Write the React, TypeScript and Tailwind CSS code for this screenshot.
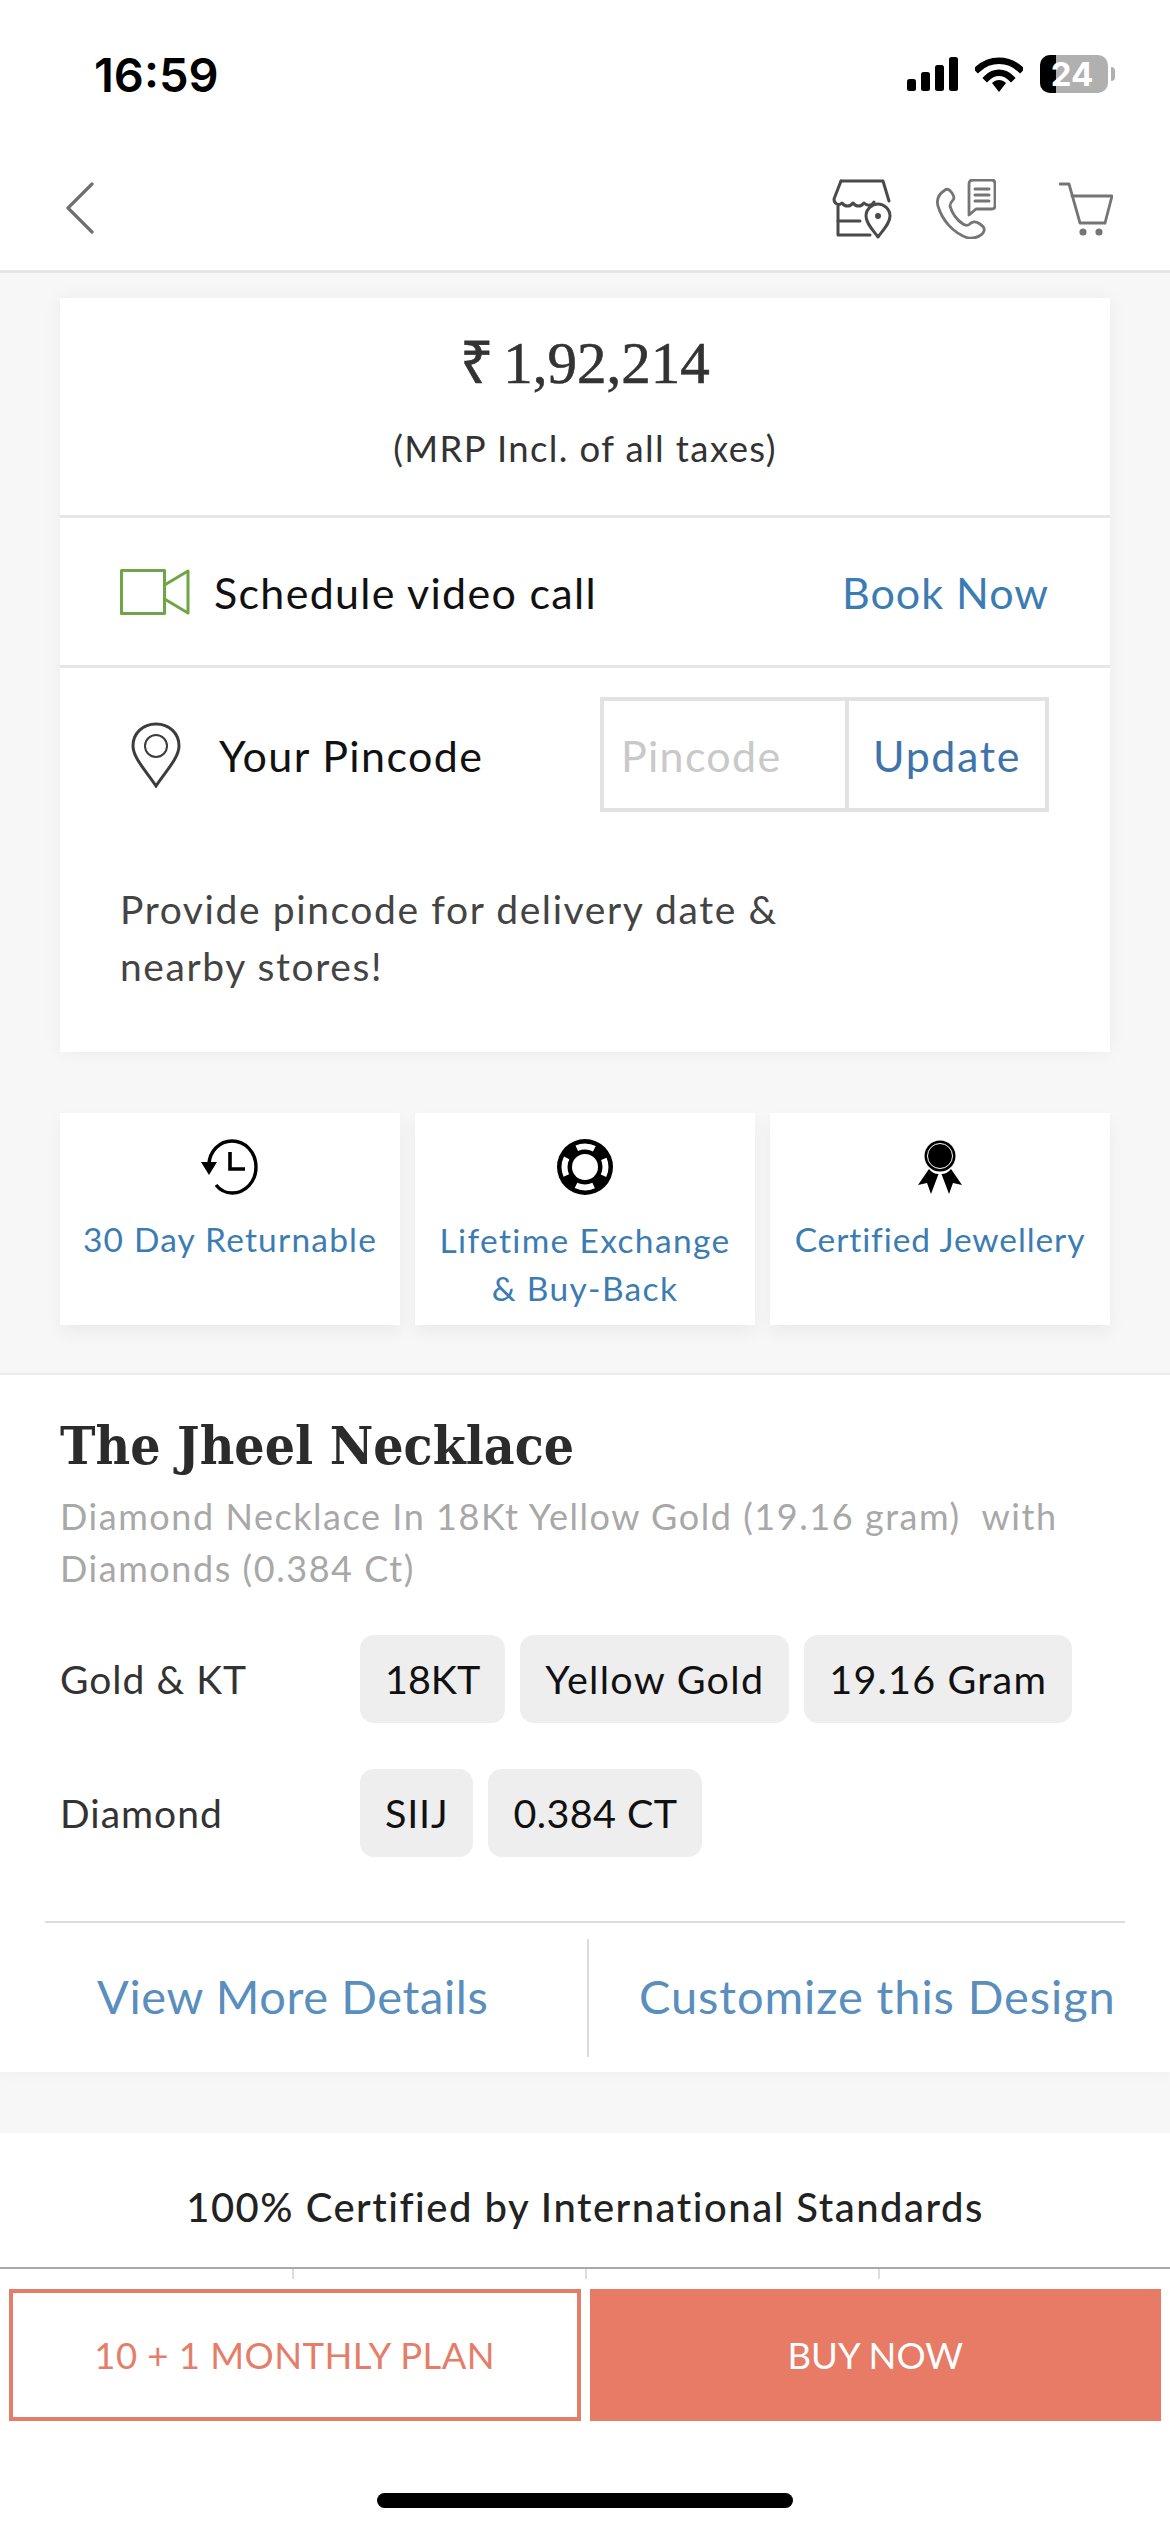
import React from "react";

function Signal() {
  return (
    <svg width="51" height="34" viewBox="0 0 51 34" fill="#000">
      <rect x="0" y="22" width="9" height="12" rx="2.5" />
      <rect x="14" y="15" width="9" height="19" rx="2.5" />
      <rect x="28" y="8" width="9" height="26" rx="2.5" />
      <rect x="42" y="0" width="9" height="34" rx="2.5" />
    </svg>
  );
}
function Wifi() {
  return (
    <svg width="48" height="36" viewBox="0 0 48 36" fill="none">
      <path d="M3 13 C15 2 33 2 45 13" stroke="#000" strokeWidth="6.5" strokeLinecap="square" />
      <path d="M12 22 C19 15 29 15 36 22" stroke="#000" strokeWidth="6.5" strokeLinecap="square" />
      <path d="M17 27 C21 23 27 23 31 27 L24 36 Z" fill="#000" />
    </svg>
  );
}
function Battery() {
  return (
    <div className="flex items-center gap-[3px]">
      <div className="relative w-[68px] h-[38px] rounded-[10px] bg-[#b0b0b0] flex items-center justify-center">
        <div className="absolute left-0 top-0 bottom-0 w-[16px] rounded-l-[10px] bg-black" />
        <span className="relative text-white text-[33px] leading-[38px] font-bold font-['Inter',sans-serif] -ml-[4px]">24</span>
      </div>
      <div className="w-[4px] h-[14px] rounded-r-full bg-[#b0b0b0]" />
    </div>
  );
}
function Store() {
  return (
    <svg width="60" height="60" viewBox="0 0 60 60" fill="none" stroke="#4a4a4a" strokeWidth="3" strokeLinecap="round" strokeLinejoin="round">
      <path d="M9 2 H51 L57 22" />
      <path d="M9 2 L2 20 C2 25 7 27 10 24 C13 28 18 28 21 24 C24 28 29 28 32 24 C35 27 40 27 42 23" />
      <path d="M6 27 V56 H38" />
      <path d="M6 42 H28" />
      <path d="M46 58 C40 50 34 44 34 37 C34 30 40 25 46 25 C52 25 58 30 58 37 C58 44 52 50 46 58 Z" fill="#fff" />
      <circle cx="46" cy="37" r="3" fill="#4a4a4a" stroke="none" />
    </svg>
  );
}
function PhoneChat() {
  return (
    <svg width="60" height="60" viewBox="0 0 60 60" fill="none" stroke="#757575" strokeWidth="2.8" strokeLinecap="round" strokeLinejoin="round">
      <path d="M9 11 C3 15 0 20 2 27 C6 41 17 54 32 59 C40 60 47 56 48 52 C49 49 47 47 44 45 C41 43 38 42 35 44 C32 47 30 47 27 45 C21 41 16 34 14 27 C14 24 15 23 17 21 C19 19 18 17 16 14 C14 11 12 9 9 11 Z" />
      <path d="M33 36 V5 C33 2 35 1 37 1 H56 C58 1 59 2 59 5 V27 C59 29 58 30 56 30 H40 Z" />
      <path d="M39 10 H53 M39 16 H53 M39 22 H53" strokeWidth="3" />
    </svg>
  );
}
function Cart() {
  return (
    <svg width="54" height="54" viewBox="0 0 54 54" fill="none" stroke="#757575" strokeWidth="2.8" strokeLinecap="round" strokeLinejoin="round">
      <path d="M1 2 H10 L21 41 H46" />
      <path d="M13 14 H53 L46 41" />
      <circle cx="24" cy="50" r="3.6" fill="#757575" stroke="none" />
      <circle cx="40" cy="50" r="3.6" fill="#757575" stroke="none" />
    </svg>
  );
}
function Video() {
  return (
    <svg width="70" height="46" viewBox="0 0 70 46" fill="none" stroke="#6fa544" strokeWidth="3" strokeLinejoin="round">
      <rect x="1.5" y="1.5" width="43" height="43" />
      <path d="M44.5 16 L68 2 V44 L44.5 30" />
    </svg>
  );
}
function Pin() {
  return (
    <svg width="52" height="66" viewBox="0 0 52 66" fill="none" stroke="#3c3c3c" strokeWidth="3">
      <path d="M26 64 C17 50 3 36 3 24 C3 11 13 2 26 2 C39 2 49 11 49 24 C49 36 35 50 26 64 Z" />
      <circle cx="26" cy="24" r="11" strokeWidth="2" />
    </svg>
  );
}
function ClockBack() {
  return (
    <svg width="58" height="56" viewBox="0 0 58 56" fill="none" stroke="#000" strokeWidth="3.4">
      <path d="M8 26 C8 12 19 2 31 2 C44 2 55 13 55 28 C55 43 44 54 31 54 C24 54 19 51 15 46" />
      <path d="M29 13 V30 H44" strokeWidth="3.6" />
      <path d="M0 23 H16 L8 36 Z" fill="#000" stroke="none" />
    </svg>
  );
}
function Ring() {
  return (
    <svg width="56" height="56" viewBox="0 0 56 56">
      <circle cx="28" cy="28" r="28" fill="#000" />
      <circle cx="28" cy="28" r="13" fill="#fff" />
      <circle cx="28" cy="28" r="20.5" fill="none" stroke="#fff" strokeWidth="6" strokeDasharray="18.2 14" strokeDashoffset="9.1" />
    </svg>
  );
}
function Award() {
  return (
    <svg width="44" height="54" viewBox="0 0 44 54">
      <circle cx="22" cy="16" r="15.5" fill="#000" />
      <circle cx="22" cy="16" r="12.5" fill="none" stroke="#fff" strokeWidth="1" />
      <path d="M11 29 L0 45 L9 43 L13 54 L20.5 34 C17 34 13 32 11 29 Z" fill="#000" />
      <path d="M33 29 L44 45 L35 43 L31 54 L23.5 34 C27 34 31 32 33 29 Z" fill="#000" />
    </svg>
  );
}

function Chip({ children, track }: { children: React.ReactNode; track: string }) {
  return (
    <div className={`h-[88px] px-[25px] flex items-center rounded-[14px] bg-[#eeeeee] text-[39.5px] text-[#111] ${track}`}>
      {children}
    </div>
  );
}

function Benefit({ icon, lines, top, track }: { icon: React.ReactNode; lines: string[]; top: string; track: string }) {
  return (
    <div className="bg-white h-[212px] flex flex-col items-center pt-[26px] shadow-[0_8px_16px_rgba(0,0,0,0.05)]">
      <div className="h-[56px] flex items-center justify-center">{icon}</div>
      <div className={`${top} ${track} text-center text-[33.5px] leading-[48px] text-[#3b7cb3]`}>
        {lines.map((l) => (
          <div key={l}>{l}</div>
        ))}
      </div>
    </div>
  );
}

export default function App() {
  return (
    <div className="w-[1170px] h-[2532px] overflow-hidden flex flex-col bg-[#f7f7f7] font-['Lato',sans-serif]">
      <header className="bg-white h-[273px] shrink-0 border-b-[3px] border-[#e6e6e6] flex flex-col">
        <div className="h-[148px] flex items-center justify-between pl-[94px] pr-[55px]">
          <span className="text-[47px] font-semibold text-black font-['Inter',sans-serif] leading-none">16:59</span>
          <div className="flex items-center gap-[17px]">
            <Signal />
            <Wifi />
            <Battery />
          </div>
        </div>
        <div className="h-[122px] flex items-center justify-between pl-[66px] pr-[57px]">
          <svg width="28" height="52" viewBox="0 0 28 52" fill="none" stroke="#707070" strokeWidth="3.2" strokeLinecap="round" strokeLinejoin="round" className="-mt-[3px]">
            <path d="M26 2 L2 26 L26 50" />
          </svg>
          <div className="flex items-center">
            <Store />
            <div className="ml-[44px]"><PhoneChat /></div>
            <div className="ml-[63px]"><Cart /></div>
          </div>
        </div>
      </header>

      <main className="px-[60px] pt-[25px] shrink-0">
        <section className="bg-white h-[754px] flex flex-col shadow-[0_0_18px_rgba(0,0,0,0.05)]">
          <div className="h-[220px] shrink-0 border-b-[3px] border-[#e6e6e6] flex flex-col items-center">
            <div className="mt-[29px] h-[72px] flex items-center text-[59px] text-[#333] [word-spacing:-6px] [-webkit-text-stroke:0.6px_#333] font-['Liberation_Serif',serif]">₹ 1,92,214</div>
            <div className="mt-[24px] h-[50px] flex items-center text-[36.5px] text-[#333] tracking-[1.4px]">(MRP Incl. of all taxes)</div>
          </div>
          <div className="h-[150px] shrink-0 border-b-[3px] border-[#e6e6e6] flex items-center pl-[60px] pr-[61px]">
            <Video />
            <span className="ml-[24px] pt-[4px] text-[43px] text-[#111] tracking-[1.3px]">Schedule video call</span>
            <span className="ml-auto pt-[4px] text-[43px] text-[#3b7cb3] tracking-[1px]">Book Now</span>
          </div>
          <div className="flex-1 flex flex-col pl-[60px] pr-[61px]">
            <div className="mt-[29px] flex items-center">
              <div className="ml-[10px]"><Pin /></div>
              <span className="ml-[37px] pt-[4px] text-[43px] text-[#111] tracking-[1.4px]">Your Pincode</span>
              <div className="ml-auto w-[449px] h-[115px] flex border-[4px] border-[#e2e2e2]">
                <div className="w-[245px] border-r-[4px] border-[#e2e2e2] flex items-center pl-[17px] pt-[3px] text-[43px] tracking-[1.3px] text-[#c9c9c9]">Pincode</div>
                <div className="flex-1 flex items-center justify-center pt-[3px] text-[43px] text-[#3f74aa] tracking-[1.6px]">Update</div>
              </div>
            </div>
            <p className="mt-[69px] w-[760px] text-[39px] leading-[57px] text-[#444] tracking-[1.6px]">
              Provide pincode for delivery date &amp;<br />nearby stores!
            </p>
          </div>
        </section>

        <div className="mt-[61px] grid grid-cols-3 gap-[15px]">
          <Benefit icon={<ClockBack />} lines={["30 Day Returnable"]} top="mt-[20px]" track="tracking-[1.2px]" />
          <Benefit icon={<Ring />} lines={["Lifetime Exchange", "& Buy-Back"]} top="mt-[21px]" track="tracking-[1.35px]" />
          <Benefit icon={<Award />} lines={["Certified Jewellery"]} top="mt-[20px]" track="tracking-[0.9px]" />
        </div>
      </main>

      <section className="mt-[48px] bg-white h-[699px] shrink-0 border-t-[2px] border-[#ececec] flex flex-col shadow-[0_4px_10px_rgba(0,0,0,0.03)]">
        <div className="px-[60px]">
          <h1 className="mt-[35px] h-[72px] flex items-center text-[53px] font-bold text-[#2b2b2b] font-['DejaVu_Serif_Condensed','DejaVu_Serif',serif]">The Jheel Necklace</h1>
          <p className="mt-[8px] text-[36px] leading-[52px] text-[#a8a8a8] tracking-[1.55px]">
            Diamond Necklace In 18Kt Yellow Gold (19.16 gram)&nbsp; with<br />Diamonds (0.384 Ct)
          </p>
          <div className="mt-[41px] flex items-center">
            <span className="w-[300px] text-[39px] text-[#333] tracking-[1px]">Gold &amp; KT</span>
            <div className="flex gap-[15px]">
              <Chip track="tracking-[0px]">18KT</Chip>
              <Chip track="tracking-[1.3px]">Yellow Gold</Chip>
              <Chip track="tracking-[1.2px]">19.16 Gram</Chip>
            </div>
          </div>
          <div className="mt-[46px] flex items-center">
            <span className="w-[300px] text-[39px] text-[#333] tracking-[1px]">Diamond</span>
            <div className="flex gap-[15px]">
              <Chip track="tracking-[0.8px]">SIIJ</Chip>
              <Chip track="tracking-[0.4px]">0.384 CT</Chip>
            </div>
          </div>
        </div>
        <div className="mt-[64px] mx-[45px] border-t-[2px] border-[#dcdcdc] h-[136px] flex items-start pt-[16px]">
          <div className="w-[544px] h-[118px] border-r-[2px] border-[#dcdcdc] flex items-center pl-[52px] pb-[4px] text-[47px] text-[#5a8ebd] tracking-[0.6px]">View More Details</div>
          <div className="flex-1 h-[118px] flex items-center pl-[50px] pb-[4px] text-[47px] text-[#5a8ebd] tracking-[0.9px] whitespace-nowrap">Customize this Design</div>
        </div>
      </section>

      <section className="mt-[61px] bg-white flex-1 flex flex-col">
        <div className="h-[136px] shrink-0 flex items-center justify-center pt-[14px] text-[40px] font-medium text-[#222] tracking-[1.5px] border-b-[2px] border-[#aaaaaa]">
          100% Certified by International Standards
        </div>
        <div className="h-[10px] shrink-0 flex">
          <div className="ml-[292px] w-[2px] bg-[#dddddd]" />
          <div className="ml-[291px] w-[2px] bg-[#dddddd]" />
          <div className="ml-[291px] w-[2px] bg-[#dddddd]" />
        </div>
        <div className="mt-[10px] px-[9px] grid grid-cols-2 gap-[9px] h-[132px] shrink-0">
          <div className="border-[4px] border-[#e57e69] flex items-center justify-center text-[36.5px] text-[#e57e69] tracking-[0.45px]">10 + 1 MONTHLY PLAN</div>
          <div className="bg-[#e77b65] flex items-center justify-center text-[36.5px] text-white">BUY NOW</div>
        </div>
        <div className="mt-[72px] mx-auto w-[416px] h-[15px] rounded-full bg-black shrink-0" />
      </section>
    </div>
  );
}
